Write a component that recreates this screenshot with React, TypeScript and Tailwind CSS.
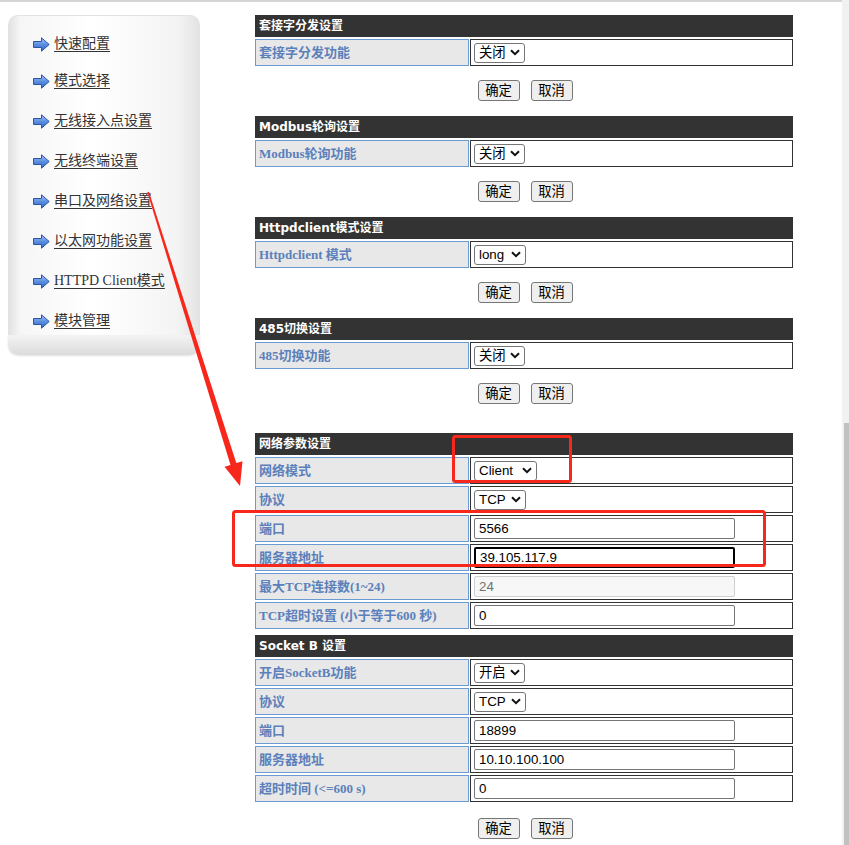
import type { ReactNode } from "react";

type Control =
  | { kind: "select"; value: string; w: string }
  | { kind: "input"; value: string; focused?: boolean; disabled?: boolean };

type Row = { label: string; control: Control };

type Section = { title: string; rows: Row[]; buttons: string | null; gap: string };

const menu = ["快速配置", "模式选择", "无线接入点设置", "无线终端设置", "串口及网络设置", "以太网功能设置", "HTTPD Client模式", "模块管理"];

const sections: Section[] = [
  { title: "套接字分发设置", rows: [{ label: "套接字分发功能", control: { kind: "select", value: "关闭", w: "w-[51px]" } }], buttons: "mt-[14px]", gap: "mt-0" },
  { title: "Modbus轮询设置", rows: [{ label: "Modbus轮询功能", control: { kind: "select", value: "关闭", w: "w-[51px]" } }], buttons: "mt-[14px]", gap: "mt-[15px]" },
  { title: "Httpdclient模式设置", rows: [{ label: "Httpdclient 模式", control: { kind: "select", value: "long", w: "w-[52px]" } }], buttons: "mt-[14px]", gap: "mt-[15px]" },
  { title: "485切换设置", rows: [{ label: "485切换功能", control: { kind: "select", value: "关闭", w: "w-[51px]" } }], buttons: "mt-[14px]", gap: "mt-[15px]" },
  {
    title: "网络参数设置",
    rows: [
      { label: "网络模式", control: { kind: "select", value: "Client", w: "w-[63px]" } },
      { label: "协议", control: { kind: "select", value: "TCP", w: "w-[52px]" } },
      { label: "端口", control: { kind: "input", value: "5566" } },
      { label: "服务器地址", control: { kind: "input", value: "39.105.117.9", focused: true } },
      { label: "最大TCP连接数(1~24)", control: { kind: "input", value: "24", disabled: true } },
      { label: "TCP超时设置 (小于等于600 秒)", control: { kind: "input", value: "0" } },
    ],
    buttons: null,
    gap: "mt-[29px]",
  },
  {
    title: "Socket B 设置",
    rows: [
      { label: "开启SocketB功能", control: { kind: "select", value: "开启", w: "w-[51px]" } },
      { label: "协议", control: { kind: "select", value: "TCP", w: "w-[52px]" } },
      { label: "端口", control: { kind: "input", value: "18899" } },
      { label: "服务器地址", control: { kind: "input", value: "10.10.100.100" } },
      { label: "超时时间 (<=600 s)", control: { kind: "input", value: "0" } },
    ],
    buttons: "mt-[16px]",
    gap: "mt-[6px]",
  },
];

const uiFont = "font-['Liberation_Sans','Noto_Sans_CJK_SC',sans-serif]";

function MenuArrow() {
  return (
    <svg width="17" height="15" viewBox="0 0 17 15" className="shrink-0">
      <defs>
        <linearGradient id="arrowFill" x1="0" y1="0" x2="0" y2="1">
          <stop offset="0" stopColor="#a8c8f5" />
          <stop offset="0.5" stopColor="#5b8fe0" />
          <stop offset="1" stopColor="#3264c2" />
        </linearGradient>
      </defs>
      <polygon points="0.5,4.5 8.5,4.5 8.5,0.8 16.2,7.5 8.5,14.2 8.5,10.5 0.5,10.5" fill="url(#arrowFill)" stroke="#2b55a6" strokeWidth="1" strokeLinejoin="round" />
    </svg>
  );
}

function Sidebar() {
  return (
    <div className="ml-[8px] mt-[13px] w-[192px] shrink-0">
      <div className="h-[320px] overflow-hidden rounded-t-[10px] border border-b-0 border-[#e2e2e2] bg-[linear-gradient(to_right,#e2e2e2,#f6f6f6_6%,#ffffff_45%,#f4f4f4_88%,#e4e4e4)] pl-[24px] pt-[11px]">
        {menu.map((item, i) => (
          <div key={item} className={`flex items-center gap-[4px] ${i === 0 ? "h-[34px]" : "h-[40px]"}`}>
            <MenuArrow />
            <span className="font-['Liberation_Serif','Noto_Sans_CJK_SC',serif] text-[14px] leading-none text-[#333] underline underline-offset-[3px]">{item}</span>
          </div>
        ))}
      </div>
      <div className="h-[20px] rounded-b-[10px] bg-[linear-gradient(to_bottom,#f3f3f3,#dcdcdc)] shadow-[0_1px_2px_rgba(0,0,0,0.12)]" />
    </div>
  );
}

function Chevron() {
  return (
    <svg width="10" height="7" viewBox="0 0 10 7" className="shrink-0">
      <path d="M1 1.2 L5 5.2 L9 1.2" fill="none" stroke="#111" strokeWidth="2" />
    </svg>
  );
}

function Field({ control }: { control: Control }) {
  if (control.kind === "select") {
    return (
      <div className={`flex h-[20px] ${control.w} items-center justify-between rounded-[3px] border border-[#767676] bg-white pl-[4px] pr-[4px] ${uiFont} text-[13.33px] text-black`}>
        <span>{control.value}</span>
        <Chevron />
      </div>
    );
  }
  const look = control.focused
    ? "border-2 border-black text-black"
    : control.disabled
      ? "border border-[#cfcfcf] bg-[#f7f7f7] text-[#707070]"
      : "border border-[#767676] text-black";
  return (
    <input
      readOnly
      value={control.value}
      className={`h-[21px] w-[261px] rounded-[2px] px-[4px] ${uiFont} text-[13.33px] outline-none ${look}`}
    />
  );
}

function Buttons({ gap }: { gap: string }) {
  return (
    <div className={`${gap} flex h-[21px] justify-center gap-[11px] pl-[2px]`}>
      {["确定", "取消"].map((b) => (
        <button key={b} className={`h-[21px] w-[42px] rounded-[3px] border border-[#767676] bg-[#efefef] ${uiFont} text-[13.33px] text-black`}>
          {b}
        </button>
      ))}
    </div>
  );
}

function RowCells({ label, children }: { label: string; children: ReactNode }) {
  return (
    <>
      <div className="flex h-[27px] items-center border border-[#6b9bd3] bg-[#e8e8e8] pl-[3px] font-['Liberation_Serif','Noto_Sans_CJK_SC',serif] text-[13px] font-bold text-[#5b80bb]">
        {label}
      </div>
      <div className="flex h-[27px] items-center border border-[#333] bg-white pl-[3px]">{children}</div>
    </>
  );
}

function SettingsTable({ section }: { section: Section }) {
  return (
    <div className={section.gap}>
      <div className="grid grid-cols-[214px_1fr] gap-x-px gap-y-[2px]">
        <div className="col-span-2 flex h-[22px] items-center bg-[#333333] pl-[4px] font-['DejaVu_Sans','Noto_Sans_CJK_SC',sans-serif] text-[12px] font-bold text-white">
          {section.title}
        </div>
        {section.rows.map((row) => (
          <RowCells key={row.label} label={row.label}>
            <Field control={row.control} />
          </RowCells>
        ))}
      </div>
      {section.buttons && <Buttons gap={section.buttons} />}
    </div>
  );
}

function Annotations() {
  return (
    <svg className="pointer-events-none absolute inset-0" width="849" height="845" viewBox="0 0 849 845">
      <rect x="453.5" y="436.5" width="117" height="45" rx="2" fill="none" stroke="#f7271c" strokeWidth="3" />
      <rect x="233.5" y="511.5" width="531" height="54" rx="2" fill="none" stroke="#f7271c" strokeWidth="3" />
      <polygon points="147.3,192.2 148.9,191.8 236.3,463.1 242.5,461.3 240,486 224.5,466.7 230.5,464.9" fill="#f7271c" />
    </svg>
  );
}

export default function App() {
  return (
    <div className="relative flex h-[845px] w-[849px] overflow-hidden bg-white">
      <div className="flex w-[842px] border-t-2 border-[#d6d6d6]">
        <Sidebar />
        <div className="ml-[55px] mt-[13px] w-[538px] shrink-0">
          {sections.map((s) => (
            <SettingsTable key={s.title} section={s} />
          ))}
        </div>
      </div>
      <div className="flex w-[7px] flex-col bg-[#f1f1f1]">
        <div className="h-[423px]" />
        <div className="ml-[2px] flex-1 bg-[#c1c1c1]" />
      </div>
      <Annotations />
    </div>
  );
}
